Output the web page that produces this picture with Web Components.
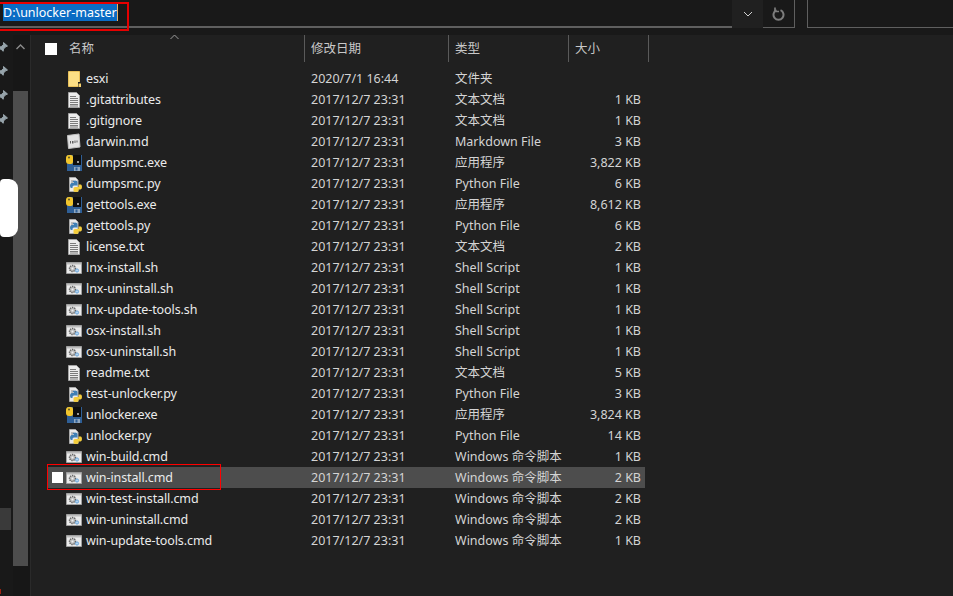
<!DOCTYPE html>
<html>
<head>
<meta charset="utf-8">
<title>unlocker-master</title>
<style>
  html, body { margin: 0; padding: 0; background: #202020; overflow: hidden; }
  body { font: 12.5px "Noto Sans", "Noto Sans CJK SC", sans-serif; color: #d4d4d4; }
</style>
</head>
<body>
<fx-window>
  <fx-address slot="top" path="D:\unlocker-master"></fx-address>
  <fx-rail slot="rail"></fx-rail>
  <fx-list slot="main"></fx-list>
</fx-window>

<script>
const ICONS = {
  folder: `<svg width="16" height="20" viewBox="0 0 16 20"><path d="M2.500 2.500h11v15h-11z" fill="#fcdf85" stroke="#e9c15a"/><path d="M12 13h4v6h-4z" fill="#202020"/><path d="M12.500 14.500h2.500v3.500h-2.500z" fill="#f6d26f"/></svg>`,
  text: `<svg width="16" height="20" viewBox="0 0 16 20"><path d="M2.500 2.500h8l3 3v12h-11z" fill="#ededed" stroke="#a4a4a4"/><path d="M4 6.500h6M4 8.500h8M4 10.500h8M4 12.500h8M4 14.500h8M4 16h8" stroke="#7c7c7c"/></svg>`,
  md: `<svg width="16" height="20" viewBox="0 0 16 20"><path d="M1.500 3.500l11.500-1.500 1 13-11.500 1.500z" fill="#e4e4e4" stroke="#c4c4c4"/><path d="M4 9h1v2.500H4zM6 9h1.500v2.500H6zM8.500 8.500h1v2.500h-1zM10.500 8.500h1v2h-1z" fill="#5f5f5f"/></svg>`,
  exe: `<svg width="16" height="20" viewBox="0 0 16 20"><path d="M1 2h15v16H1z" fill="#2f5f96"/><path d="M7 2h8v10H7z" fill="#0e0e0e"/><path d="M11 8h2v2h-2z" fill="#9a9a9a"/><path d="M8 14h6v4H8z" fill="#8fa7bf"/><path d="M9.500 14.500h2v3h-2z" fill="#2f5f96"/><path d="M0 5q0-3 3-3h2q2 0 2 2v5q0 2-2 2H3q-3 0-3-3z" fill="#f3c62c"/><circle cx="3" cy="4.500" r=".9" fill="#4a4a2a"/></svg>`,
  py: `<svg width="16" height="20" viewBox="0 0 16 20"><path d="M3.500 3.500h6l2.500 2.500v11.500H3.500z" fill="#eaeaea" stroke="#a9a9a9"/><path d="M5 7h3M5 9h2" stroke="#8a8a8a"/><path d="M6.500 8q0-1.500 2.500-1.500T11.500 8v3.500H8q-1.500 0-1.500 1.500v1H5q-1-.5-1-2.500T5.500 9h2.500v-.5z" fill="#3f7fb5"/><path d="M15 10.500q1 .5 1 2.500t-1.500 2.500H12.500V17q0 1-2.500 1t-2.500-1v-2.500q0-1.500 1.500-1.500h3.500v-2.500z" fill="#f4cd3c"/></svg>`,
  cmd: `<svg width="16" height="20" viewBox="0 0 16 20"><path d="M.5 4.500h15v11H.5z" fill="#ebebeb" stroke="#a0a0a0"/><path d="M1 5h14v1.500H1z" fill="#bcbcbc"/><circle cx="6.500" cy="10.500" r="3" fill="#c0c0c0" stroke="#666" stroke-width="1.400" stroke-dasharray="1.400 .8"/><circle cx="6.500" cy="10.500" r="1" fill="#f0f0f0"/><circle cx="11" cy="12.500" r="1.600" fill="#b5d4ef" stroke="#6ba5d8"/></svg>`
};

// name, date, type, size, icon
const FILES = [
  ['esxi', '2020/7/1 16:44', '文件夹', '', 'folder'],
  ['.gitattributes', '2017/12/7 23:31', '文本文档', '1 KB', 'text'],
  ['.gitignore', '2017/12/7 23:31', '文本文档', '1 KB', 'text'],
  ['darwin.md', '2017/12/7 23:31', 'Markdown File', '3 KB', 'md'],
  ['dumpsmc.exe', '2017/12/7 23:31', '应用程序', '3,822 KB', 'exe'],
  ['dumpsmc.py', '2017/12/7 23:31', 'Python File', '6 KB', 'py'],
  ['gettools.exe', '2017/12/7 23:31', '应用程序', '8,612 KB', 'exe'],
  ['gettools.py', '2017/12/7 23:31', 'Python File', '6 KB', 'py'],
  ['license.txt', '2017/12/7 23:31', '文本文档', '2 KB', 'text'],
  ['lnx-install.sh', '2017/12/7 23:31', 'Shell Script', '1 KB', 'cmd'],
  ['lnx-uninstall.sh', '2017/12/7 23:31', 'Shell Script', '1 KB', 'cmd'],
  ['lnx-update-tools.sh', '2017/12/7 23:31', 'Shell Script', '1 KB', 'cmd'],
  ['osx-install.sh', '2017/12/7 23:31', 'Shell Script', '1 KB', 'cmd'],
  ['osx-uninstall.sh', '2017/12/7 23:31', 'Shell Script', '1 KB', 'cmd'],
  ['readme.txt', '2017/12/7 23:31', '文本文档', '5 KB', 'text'],
  ['test-unlocker.py', '2017/12/7 23:31', 'Python File', '3 KB', 'py'],
  ['unlocker.exe', '2017/12/7 23:31', '应用程序', '3,824 KB', 'exe'],
  ['unlocker.py', '2017/12/7 23:31', 'Python File', '14 KB', 'py'],
  ['win-build.cmd', '2017/12/7 23:31', 'Windows 命令脚本', '1 KB', 'cmd'],
  ['win-install.cmd', '2017/12/7 23:31', 'Windows 命令脚本', '2 KB', 'cmd'],
  ['win-test-install.cmd', '2017/12/7 23:31', 'Windows 命令脚本', '2 KB', 'cmd'],
  ['win-uninstall.cmd', '2017/12/7 23:31', 'Windows 命令脚本', '2 KB', 'cmd'],
  ['win-update-tools.cmd', '2017/12/7 23:31', 'Windows 命令脚本', '1 KB', 'cmd']
];

class FxWindow extends HTMLElement {
  connectedCallback() {
    this.attachShadow({ mode: 'open' });
    this.shadowRoot.innerHTML = `
      <style>
        :host { display: grid; grid-template-columns: 31px 1fr; grid-template-rows: 35px 561px; width: 953px; height: 596px; background: #202020; }
        .top { grid-column: 1 / 3; }
      </style>
      <div class="top"><slot name="top"></slot></div>
      <slot name="rail"></slot>
      <slot name="main"></slot>
    `;
  }
}

class FxAddress extends HTMLElement {
  connectedCallback() {
    this.attachShadow({ mode: 'open' });
    this.shadowRoot.innerHTML = `
      <style>
        :host { display: block; height: 35px; background: #191919; position: relative; }
        .bar { display: flex; height: 28px; box-sizing: border-box; }
        .input { width: 732px; border-bottom: 2px solid #5f5f5f; padding: 4px 0 0 3px; box-sizing: border-box; }
        .sel { display: inline-block; height: 17px; line-height: 17px; background: #0a6cc4; color: #fff; border-right: 1px solid #e8b26a; vertical-align: top; }
        .drop { width: 31px; background: #202020; display: flex; align-items: center; justify-content: center; }
        .refresh { width: 32px; border: solid #5f5f5f; border-width: 0 1px 1px 0; display: flex; align-items: center; justify-content: center; box-sizing: border-box; height: 28px; }
        .gap { width: 12px; }
        .search { flex: 1; border: solid #5f5f5f; border-width: 0 0 1px 1px; height: 28px; box-sizing: border-box; }
        .mark { position: absolute; left: -2px; top: 2px; width: 127px; height: 25px; border: 2px solid #e60000; }
      </style>
      <div class="bar">
        <div class="input"><span class="sel">${this.getAttribute('path')}</span></div>
        <div class="drop"><svg width="10" height="6" viewBox="0 0 10 6"><path d="M1 1l4 4 4-4" fill="none" stroke="#d0d0d0"/></svg></div>
        <div class="refresh"><svg width="13" height="14" viewBox="0 0 13 14"><path d="M4.500 3.200A5 5 0 1 0 8.500 3.200" fill="none" stroke="#7d7d7d" stroke-width="2"/><path d="M3 .5v4h4" fill="none" stroke="#7d7d7d" stroke-width="1.700"/></svg></div>
        <div class="gap"></div>
        <div class="search"></div>
      </div>
      <div class="mark"></div>
    `;
  }
}

class FxRail extends HTMLElement {
  connectedCallback() {
    this.attachShadow({ mode: 'open' });
    const pin = `<svg width="12" height="12" viewBox="0 0 12 12"><path d="M6.500 1.500l4 3.500-1.800.8-2.200 2.200-.3 2.300L2 6.200l2.300-.6 2.200-2.100zM3.500 8L1 11" fill="#97a4ab" stroke="#97a4ab"/></svg>`;
    this.shadowRoot.innerHTML = `
      <style>
        :host { display: grid; grid-template-columns: 13px 15px 2px 1px; height: 561px; position: relative; background: #191919; }
        .nav { display: flex; flex-direction: column; overflow: hidden; }
        .pins { display: grid; grid-auto-rows: 24px; padding-top: 6px; margin-left: -3px; }
        .current { margin-top: 371px; height: 22px; width: 11px; background: #3a3a3a; }
        .track { display: flex; flex-direction: column; background: #171717; }
        .arrow { height: 56px; display: flex; justify-content: center; padding-top: 9px; box-sizing: border-box; }
        .thumb { height: 475px; background: #4d4d4d; }
        .dark { background: #171717; }
        .edge { background: #2a2a2a; }
        .blob { position: absolute; left: 0; top: 144px; width: 18px; height: 58px; background: #fff; border-radius: 4px 9px 9px 4px; }
        .speck { position: absolute; left: 0; top: 554px; width: 1px; height: 5px; background: #a02010; }
      </style>
      <div class="nav">
        <div class="pins">${pin}${pin}${pin}${pin}</div>
        <div class="current"></div>
      </div>
      <div class="track">
        <div class="arrow"><svg width="9" height="6" viewBox="0 0 9 6"><path d="M.5 5L4.500 1l4 4" fill="none" stroke="#8c8c8c" stroke-width="1.400"/></svg></div>
        <div class="thumb"></div>
      </div>
      <div class="dark"></div>
      <div class="edge"></div>
      <div class="blob"></div>
      <div class="speck"></div>
    `;
  }
}

class FxList extends HTMLElement {
  connectedCallback() {
    this.attachShadow({ mode: 'open' });
    this.shadowRoot.innerHTML = `
      <style>
        :host { display: block; background: #202020; position: relative; }
        .head { display: grid; grid-template-columns: 274px 144px 120px 80px; height: 33px; position: relative; color: #c8c8c8; }
        .h { border-right: 1px solid #5a5a5a; height: 27px; line-height: 28px; padding-left: 6px; box-sizing: border-box; }
        .h.name { padding-left: 38px; }
        .check { position: absolute; left: 14px; top: 8px; width: 12px; height: 12px; background: #fff; }
        .sort { position: absolute; left: 139px; top: -1px; }
      </style>
      <div class="head">
        <div class="h name">名称</div><div class="h">修改日期</div><div class="h">类型</div><div class="h">大小</div>
        <div class="check"></div>
        <svg class="sort" width="9" height="6" viewBox="0 0 9 6"><path d="M.5 5L4.500 1l4 4" fill="none" stroke="#9a9a9a"/></svg>
      </div>
      <div>${FILES.map(f => `<fx-row name="${f[0]}" date="${f[1]}" kind="${f[2]}" size="${f[3]}" icon="${f[4]}"${f[0] === 'win-install.cmd' ? ' selected' : ''}></fx-row>`).join('')}</div>
    `;
  }
}

class FxRow extends HTMLElement {
  connectedCallback() {
    this.attachShadow({ mode: 'open' });
    const selected = this.hasAttribute('selected');
    this.shadowRoot.innerHTML = `
      <style>
        :host { display: block; position: relative; margin-left: 16px; width: 598px; }
        .row { display: grid; grid-template-columns: 39px 225px 144px 120px 66px; height: 21px; line-height: 21px; align-items: center; white-space: nowrap; }
        :host([selected]) .row { background: #4d4d4d; }
        .ic { margin-left: 19px; height: 20px; width: 16px; }
        svg { display: block; }
        .name { color: #ebebeb; letter-spacing: -0.1px; }
        .size { text-align: right; }
        .check { position: absolute; left: 5px; top: 5px; width: 11px; height: 11px; background: #fff; }
        .mark { position: absolute; z-index: 2; left: 0; top: -3px; width: 172px; height: 24px; border: 1px solid #f00; }
      </style>
      <div class="row">
        <div class="ic">${ICONS[this.getAttribute('icon')]}</div>
        <div class="name">${this.getAttribute('name')}</div>
        <div class="date">${this.getAttribute('date')}</div>
        <div class="kind">${this.getAttribute('kind')}</div>
        <div class="size">${this.getAttribute('size')}</div>
      </div>
      ${selected ? '<div class="check"></div><div class="mark"></div>' : ''}
    `;
  }
}

customElements.define('fx-window', FxWindow);
customElements.define('fx-address', FxAddress);
customElements.define('fx-rail', FxRail);
customElements.define('fx-list', FxList);
customElements.define('fx-row', FxRow);
</script>
</body>
</html>
